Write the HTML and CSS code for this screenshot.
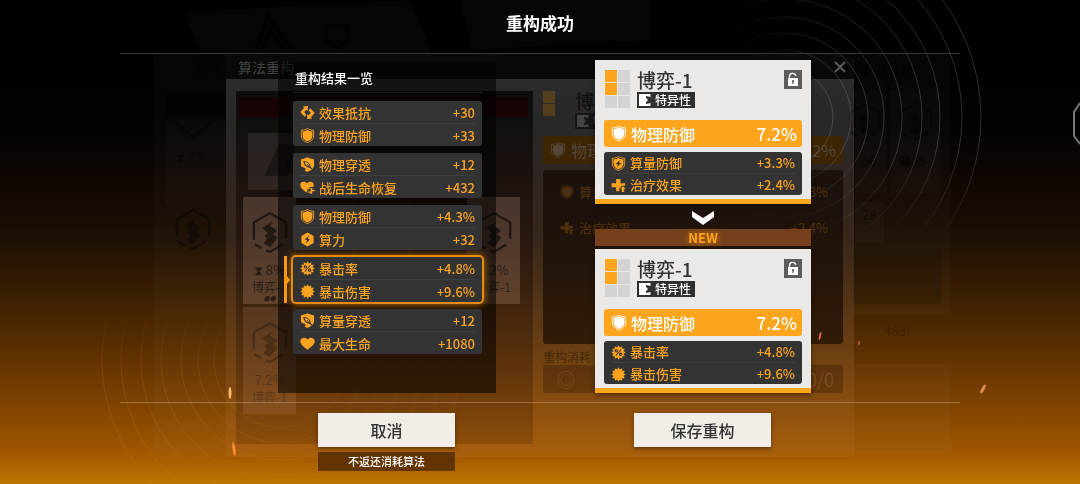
FILE: index.html
```html
<!DOCTYPE html>
<html lang="zh-CN">
<head>
    <meta charset="UTF-8">
    <meta name="viewport" content="width=device-width, initial-scale=1">
    <title>重构成功</title>
    <link rel="stylesheet" href="styles.css">
</head>
<body>
    <!-- icon set -->
    <svg class="icon-defs" aria-hidden="true">
        <symbol id="i-resist" viewBox="0 0 16 16">
            <path d="M8.5 1 3 1.6l1.3 1.7L.4 7.4l4.4 5 2-2-2.4-3L7 5l1.3 1.5zM7.5 15l5.5-.6-1.3-1.7 3.9-4.1-4.4-5-2 2 2.4 3L9 11l-1.3-1.5z"/>
        </symbol>
        <symbol id="i-shield" viewBox="0 0 16 16">
            <path d="M8 .6c2 1.2 4 1.700 6.600 1.800v6.100c0 3.500-3 5.800-6.600 7-3.600-1.200-6.600-3.500-6.600-7V2.400C4 2.300 6 1.800 8 .6z" fill="none" stroke="currentColor" stroke-width=".9"/>
            <path d="M8 2c1.600.9 3.200 1.300 5.300 1.400v5.100c0 2.800-2.400 4.600-5.300 5.700-2.900-1.100-5.300-2.900-5.300-5.700V3.400C4.800 3.300 6.400 2.900 8 2z"/>
        </symbol>
        <symbol id="i-pierce" viewBox="0 0 16 16">
            <path fill-rule="evenodd" d="M8 .3c2.200 1.300 4.400 1.900 7 2v6.300c0 3.700-3.200 6-7 7.200-1-.3-2-.7-2.800-1.200L6 12 1.600 10.500A6 6 0 0 1 1 8.600V2.300c2.600-.1 4.800-.7 7-2zM3.600 4.200c.1 3.500 2.200 6.600 7 7.400l1.900 1.600.7-.8-1.800-1.700C11.200 6.600 8 4.300 3.600 4.200zM5 5.400c3 .3 5 2 5.400 4.600L7.600 7.500l-.5.6 2.600 2.300C7 9.700 5.300 8 5 5.400z"/>
        </symbol>
        <symbol id="i-heart" viewBox="0 0 16 16">
            <path d="M8 14.600C4.500 11.800.3 9.200.3 5.600.3 1.700 5.600.4 8 3.700c2.400-3.300 7.700-2 7.700 1.900 0 3.600-4.200 6.200-7.700 9z"/>
        </symbol>
        <symbol id="i-regen" viewBox="0 0 16 16">
            <path d="M7.200 13.400C4 10.900.3 8.600.3 5.300.3 1.900 5 .7 7.300 3.600 9.600.7 14.600 1.700 14.600 5.300c0 .8-.2 1.500-.6 2.200h-3.800v2.300H7.800v3z"/>
            <path d="M11.200 8.500h1.800v2h2.700v1.600H13V15h-1.800v-1.300H8.800v-1.500h2.400z"/>
        </symbol>
        <symbol id="i-power" viewBox="0 0 16 16">
            <path fill-rule="evenodd" d="M8 .5l6.500 3.700v7.600L8 15.500l-6.500-3.700V4.200zM9.600 3.800 5.200 8l2.400.9-1.400 3.400 4.500-4.400-2.400-.8z"/>
        </symbol>
        <symbol id="i-burst" viewBox="0 0 16 16">
            <path d="M8 .2 9.450 2.600 11.900 1.250 11.960 4.040 14.750 4.100 13.400 6.550 15.800 8 13.400 9.450 14.750 11.900 11.960 11.960 11.900 14.750 9.450 13.400 8 15.800 6.550 13.400 4.100 14.750 4.040 11.960 1.250 11.900 2.600 9.450 .2 8 2.600 6.550 1.250 4.100 4.040 4.040 4.100 1.250 6.550 2.600z"/>
        </symbol>
        <symbol id="i-rate" viewBox="0 0 16 16">
            <use href="#i-burst"/>
            <g fill="none" stroke="#333" stroke-width="1.200"><path d="M10.800 4.800l-5.600 6.400"/><circle cx="5.700" cy="6.200" r="1.200"/><circle cx="10.300" cy="9.900" r="1.200"/></g>
        </symbol>
        <symbol id="i-calcdef" viewBox="0 0 16 16">
            <use href="#i-shield"/>
            <path fill="#333" d="M9.400 4.200 5.200 8.500l2.300.6-1 3 4.300-4.600-2.300-.5z"/>
        </symbol>
        <symbol id="i-heal" viewBox="0 0 16 16">
            <path d="M5.500 1h4.600v4.600h5v2.600h-4.300v2H9v3.800H5.500v-4.200H.6V5.600h4.900z"/>
            <path d="M12.800 8.800l2.800 2.700h-1.500V15h-2.600v-3.500H10z"/>
        </symbol>
        <symbol id="i-lock" viewBox="0 0 18 19">
            <path d="M5.500 7.800V6.500a3.200 3.200 0 0 1 6.300-.7" fill="none" stroke="currentColor" stroke-width="1.300"/>
            <path fill-rule="evenodd" d="M4 8h10v8H4zm5 2a1.200 1.200 0 0 0-.6 2.200V14h1.200v-1.800A1.200 1.200 0 0 0 9 10z"/>
        </symbol>
        <symbol id="i-trait" viewBox="0 0 12 12">
            <path d="M0 0h11.500v3L7 2v2l1.500 1v2L7 8v2l4.500-1v3H0z"/>
        </symbol>
        <symbol id="i-hex" viewBox="0 0 40 46">
            <path d="M3 30V12L20 2l17 10v17M33 35 20 43l-4-2M11 39l-7-4" fill="none" stroke="currentColor" stroke-width="2.500"/>
            <path d="M23 10 12 18l6 5-4 3 3 3-4 5 7 4 8-10-5-4 5-3-8-6z"/>
        </symbol>
    </svg>

    <!-- reconstruct window, dimmed under the result -->
    <div class="window" aria-hidden="true">
        <div class="window-head">
            <span>算法重构</span>
            <button class="window-close" tabindex="-1"><svg viewBox="0 0 12 12"><path d="M1 1l10 10M11 1 1 11"/></svg></button>
        </div>
        <div class="window-body">
            <div class="bag">
                <div class="bag-strip"></div>
                <div class="bag-preview"><svg viewBox="0 0 60 50"><path d="M4 38 18 8l14 4-6 26z"/><circle cx="34" cy="28" r="10"/></svg></div>
                <div class="bag-grid">
                    <div class="slot"><svg><use href="#i-hex"/></svg><b>⧗ 8%</b><span>博弈-1</span><i>●●</i></div>
                    <div class="slot dark"></div>
                    <div class="slot dark"></div>
                    <div class="slot dark"></div>
                    <div class="slot"><svg><use href="#i-hex"/></svg><b>7.2%</b><span>博弈-1</span></div>
                    <div class="slot low"><svg><use href="#i-hex"/></svg><b>7.2%</b><span>博弈-1</span></div>
                </div>
            </div>
            <div class="detail">
                <div class="detail-top">
                    <div class="cells"><i class="on"></i><i></i><i class="on"></i><i></i><i></i><i></i></div>
                    <div>
                        <div class="name">博弈-1</div>
                        <div class="trait"><svg><use href="#i-trait"/></svg>特异性</div>
                    </div>
                </div>
                <div class="detail-main"><svg><use href="#i-shield"/></svg><span>物理防御</span><b>7.2%</b></div>
                <div class="detail-sub">
                    <div><svg><use href="#i-calcdef"/></svg><span>算量防御</span><b>+3.3%</b></div>
                    <div><svg><use href="#i-heal"/></svg><span>治疗效果</span><b>+2.4%</b></div>
                </div>
                <div class="cost-label">重构消耗</div>
                <div class="cost"><span>◎</span><b>0/0</b></div>
            </div>
        </div>
    </div>

    <!-- rings, sparks and far scenery -->
    <svg class="scene" viewBox="0 0 1080 484" preserveAspectRatio="xMidYMid slice" aria-hidden="true">
        <defs>
            <linearGradient id="fade" x1="0" x2="1"><stop offset=".2" stop-color="#999" stop-opacity="0"/><stop offset="1" stop-color="#999" stop-opacity=".3"/></linearGradient>
            <linearGradient id="fade2" x1="1" x2="0"><stop offset=".2" stop-color="#d98a3c" stop-opacity=".08"/><stop offset="1" stop-color="#d98a3c" stop-opacity=".2"/></linearGradient>
            <linearGradient id="down" x2="0" y2="1"><stop offset="0" stop-color="#fff"/><stop offset=".6" stop-color="#fff"/><stop offset="1" stop-color="#000"/></linearGradient>
            <linearGradient id="up" x2="0" y2="1"><stop offset="0" stop-color="#000"/><stop offset=".5" stop-color="#fff"/></linearGradient>
            <mask id="m"><rect x="540" width="540" height="250" fill="url(#down)"/></mask>
            <mask id="m2"><rect y="300" width="540" height="184" fill="url(#up)"/></mask>
        </defs>
        <g fill="#fff" fill-opacity=".02">
            <path d="M184 12 410 0l22 53H200zM460 0h190v40l-178 10z"/>
            <path d="M153 54h73v403h-73zM853 54h98v260h-98zM853 364h98v90h-98z"/>
            <path d="M166 120h60v84h-60zM856 84h30v110h-30zM890 84h50v110h-50zM856 202h28v40h-28z"/>
        </g>
        <path d="M166 92h60v26h-60zM853 84h88v6h-88z" fill="#000" fill-opacity=".3"/>
        <path d="M853 250h88v54h-88z" fill="#000" fill-opacity=".12"/>
        <path d="M256 50l12-34 24 34M262 50l8-20 14 20M326 26h22v14l-11 8-11-8z" fill="none" stroke="#000" stroke-width="4" stroke-opacity=".5"/>
        <g class="far-text">
            <text x="195" y="72">区间</text><text x="176" y="162">⧗ 8%</text><text x="862" y="74">◧特异性</text>
            <text x="862" y="166">56</text><text x="898" y="166">●55</text><text x="862" y="220">28</text><text x="884" y="336" fill-opacity=".2">483/</text>
        </g>
        <g class="far-hex">
            <use href="#i-hex" x="174" y="208" width="38" height="44"/><use href="#i-hex" x="848" y="100" width="34" height="44"/><use href="#i-hex" x="898" y="100" width="36" height="44"/>
            <path d="M175 122l18 15 18-15" fill="none" stroke="#000" stroke-width="3"/>
        </g>
        <g mask="url(#m)" fill="none" stroke="url(#fade)">
            <circle cx="784" cy="117" r="49"/><circle cx="784" cy="117" r="67"/><circle cx="784" cy="117" r="84"/><circle cx="784" cy="117" r="100"/><circle cx="784" cy="117" r="118"/><circle cx="784" cy="117" r="138"/><circle cx="784" cy="117" r="156"/><circle cx="784" cy="117" r="178"/><circle cx="784" cy="117" r="197"/>
        </g>
        <g mask="url(#m2)" fill="none" stroke="url(#fade2)">
            <circle cx="281" cy="360" r="67"/><circle cx="281" cy="360" r="83"/><circle cx="281" cy="360" r="100"/><circle cx="281" cy="360" r="120"/><circle cx="281" cy="360" r="140"/><circle cx="281" cy="360" r="160"/><circle cx="281" cy="360" r="179"/>
        </g>
        <path d="M1080 103l-6 9v24l6 8" fill="none" stroke="#777" stroke-width="2"/>
        <g fill="#ffb765">
            <ellipse cx="230" cy="393" rx="1.500" ry="6"/>
            <ellipse cx="234" cy="449" rx="1.500" ry="7" fill="#ff8a35" transform="rotate(-8 234 449)"/>
            <ellipse cx="983" cy="389" rx="1.500" ry="5" fill="#e08a4a" transform="rotate(28 983 389)"/>
            <ellipse cx="820" cy="336" rx="1" ry="4" fill="#d9722e" transform="rotate(12 820 336)"/>
            <ellipse cx="859" cy="343" rx="1" ry="2" fill="#b8602a"/>
        </g>
    </svg>

    <main class="result">
        <h1 class="result-title">重构成功</h1>

        <div class="columns">
            <section class="history">
                <h2>重构结果一览</h2>
                <div class="options">
                    <button class="option">
                        <span class="stat"><svg><use href="#i-resist"/></svg>效果抵抗<b>+30</b></span>
                        <span class="stat"><svg><use href="#i-shield"/></svg>物理防御<b>+33</b></span>
                    </button>
                    <button class="option">
                        <span class="stat"><svg><use href="#i-pierce"/></svg>物理穿透<b>+12</b></span>
                        <span class="stat"><svg><use href="#i-regen"/></svg>战后生命恢复<b>+432</b></span>
                    </button>
                    <button class="option">
                        <span class="stat"><svg><use href="#i-shield"/></svg>物理防御<b>+4.3%</b></span>
                        <span class="stat"><svg><use href="#i-power"/></svg>算力<b>+32</b></span>
                    </button>
                    <button class="option selected" aria-pressed="true">
                        <span class="stat"><svg><use href="#i-rate"/></svg>暴击率<b>+4.8%</b></span>
                        <span class="stat"><svg><use href="#i-burst"/></svg>暴击伤害<b>+9.6%</b></span>
                    </button>
                    <button class="option">
                        <span class="stat"><svg><use href="#i-pierce"/></svg>算量穿透<b>+12</b></span>
                        <span class="stat"><svg><use href="#i-heart"/></svg>最大生命<b>+1080</b></span>
                    </button>
                </div>
            </section>

            <section class="compare">
                <article class="card">
                    <div class="card-top">
                        <div class="cells"><i class="on"></i><i></i><i class="on"></i><i></i><i></i><i></i></div>
                        <div class="card-info">
                            <h3 class="name">博弈-1</h3>
                            <div class="trait"><svg><use href="#i-trait"/></svg>特异性</div>
                        </div>
                        <button class="lock" aria-label="锁定"><svg><use href="#i-lock"/></svg></button>
                    </div>
                    <div class="main-stat"><svg><use href="#i-shield"/></svg>物理防御<b>7.2%</b></div>
                    <div class="sub-stats">
                        <div class="stat"><svg><use href="#i-calcdef"/></svg>算量防御<b>+3.3%</b></div>
                        <div class="stat"><svg><use href="#i-heal"/></svg>治疗效果<b>+2.4%</b></div>
                    </div>
                </article>

                <svg class="arrow" viewBox="0 0 22 14" aria-hidden="true"><path d="M0 0l11 7 11-7v6l-11 8L0 6z"/></svg>
                <div class="new-tag">NEW</div>

                <article class="card">
                    <div class="card-top">
                        <div class="cells"><i class="on"></i><i></i><i class="on"></i><i></i><i></i><i></i></div>
                        <div class="card-info">
                            <h3 class="name">博弈-1</h3>
                            <div class="trait"><svg><use href="#i-trait"/></svg>特异性</div>
                        </div>
                        <button class="lock" aria-label="锁定"><svg><use href="#i-lock"/></svg></button>
                    </div>
                    <div class="main-stat"><svg><use href="#i-shield"/></svg>物理防御<b>7.2%</b></div>
                    <div class="sub-stats">
                        <div class="stat"><svg><use href="#i-rate"/></svg>暴击率<b>+4.8%</b></div>
                        <div class="stat"><svg><use href="#i-burst"/></svg>暴击伤害<b>+9.6%</b></div>
                    </div>
                </article>
            </section>
        </div>

        <div class="actions">
            <div class="action">
                <button class="btn">取消</button>
                <p class="note">不返还消耗算法</p>
            </div>
            <div class="action">
                <button class="btn">保存重构</button>
            </div>
        </div>
    </main>
</body>
</html>
```

FILE: styles.css
```css
* {
    box-sizing: border-box;
}
body {
    margin: 0;
    min-height: 100vh;
    position: relative;
    overflow: hidden;
    font-family: "Noto Sans CJK SC", "Noto Sans", sans-serif;
    font-size: 13px;
    line-height: 20px;
    background: linear-gradient(#000 0%, #020101 25%, #0d0602 36%, #1e1003 50%, #3d2002 62%, #603200 74%, #804400 84%, #9f5600 93%, #b06600 97%, #bd7500 100%);
}
h1, h2, h3, p {
    margin: 0;
}
button {
    font: inherit;
    border: none;
    padding: 0;
    cursor: pointer;
}
svg {
    display: block;
    fill: currentColor;
    flex-shrink: 0;
}
b {
    font-weight: 400;
    margin-left: auto;
}
.icon-defs {
    position: absolute;
    width: 0;
    height: 0;
}

/* far scenery */
.scene {
    position: absolute;
    top: 0;
    left: 0;
    width: 100%;
    height: 100%;
}
.far-text {
    font-size: 13px;
    fill: #000;
    fill-opacity: 0.5;
}
.far-hex {
    color: #000;
    opacity: 0.35;
}

/* window under the result */
.window {
    position: absolute;
    top: 54px;
    left: calc(50% - 314px);
    width: 628px;
    height: 403px;
    display: flex;
    flex-direction: column;
}
.window-head {
    height: 25px;
    padding: 0 8px 0 12px;
    display: flex;
    align-items: center;
    justify-content: space-between;
    font-size: 14px;
    color: #424242;
    background: #090909;
}
.window-close {
    background: none;
}
.window-close svg {
    width: 12px;
    height: 12px;
    stroke: #5a5a5a;
    stroke-width: 2;
}
.window-body {
    flex: 1;
    display: flex;
    gap: 10px;
    padding: 12px 10px 13px;
    background: linear-gradient(rgba(255, 255, 255, 0.17), rgba(230, 200, 190, 0.13) 40%, rgba(210, 140, 100, 0.12));
}
.bag {
    width: 297px;
    padding: 6px 0 0 7px;
    background: linear-gradient(rgba(0, 0, 0, 0.7), rgba(20, 5, 0, 0.5) 35%, rgba(80, 35, 0, 0.25));
}
.bag-strip {
    height: 20px;
    margin: 0 5px 0 -4px;
    background: #170303;
}
.bag-preview {
    width: 82px;
    height: 57px;
    margin: 16px 0 7px 5px;
    background: rgba(255, 255, 255, 0.08);
    color: rgba(0, 0, 0, 0.35);
}
.bag-preview svg {
    width: 66px;
    height: 57px;
    margin-left: 12px;
}
.bag-grid {
    display: grid;
    grid-template-columns: repeat(5, 53px);
    gap: 3px;
}
.slot {
    height: 107px;
    padding-top: 14px;
    display: flex;
    flex-direction: column;
    align-items: center;
    font-size: 12px;
    line-height: 16px;
    color: rgba(0, 0, 0, 0.55);
    background: rgba(235, 190, 165, 0.2);
}
.slot.low {
    color: rgba(0, 0, 0, 0.25);
    background: rgba(235, 190, 165, 0.12);
}
.slot.dark {
    background: rgba(0, 0, 0, 0.15);
}
.slot svg {
    width: 38px;
    height: 44px;
    margin-bottom: 5px;
}
.slot b {
    margin: 0;
    font-size: 13px;
    line-height: 19px;
}
.slot i {
    font-size: 6px;
    line-height: 8px;
}
.detail {
    width: 300px;
}
.detail-top {
    display: flex;
    gap: 7px;
    height: 45px;
    opacity: 0.6;
}
.detail .cells {
    opacity: 0.5;
}
.detail .cells i {
    background: none;
}
.detail .cells i.on {
    background: #b87408;
}
.detail .name {
    color: #000;
}
.detail .trait {
    color: #555;
    background: #080808;
}
.detail-main {
    height: 28px;
    padding: 0 7px;
    display: flex;
    align-items: center;
    gap: 5px;
    font-size: 16px;
    color: #54473a;
    background: #3d2403;
    border-radius: 3px;
}
.detail-main svg {
    width: 16px;
    height: 16px;
}
.detail-sub {
    height: 174px;
    margin: 6px 0 3px;
    padding: 4px 15px 0 17px;
    background: rgba(15, 5, 0, 0.6);
    border-radius: 3px;
    color: #50300a;
}
.detail-sub div {
    height: 36px;
    display: flex;
    align-items: center;
    gap: 5px;
}
.detail-sub svg {
    width: 14px;
    height: 14px;
}
.cost-label {
    height: 18px;
    font-size: 12px;
    color: rgba(0, 0, 0, 0.4);
}
.cost {
    height: 28px;
    padding: 0 9px 0 14px;
    display: flex;
    align-items: center;
    font-size: 18px;
    color: rgba(160, 110, 70, 0.4);
    background: rgba(40, 15, 0, 0.3);
    border-radius: 3px;
}

/* result */
.result {
    position: relative;
    width: calc(100% - 240px);
    margin: 0 auto;
}
.result-title {
    height: 54px;
    padding-top: 13px;
    text-align: center;
    font-size: 17px;
    font-weight: 700;
    color: #fff;
    border-bottom: 1px solid #383838;
}
.columns {
    display: flex;
    justify-content: center;
    gap: 99px;
    padding: 6px 0 9px 9px;
}
.history {
    width: 218px;
    margin-top: 2px;
    padding: 6px 14px 39px 15px;
    background: rgba(0, 0, 0, 0.55);
}
.history h2 {
    height: 25px;
    margin-bottom: 8px;
    padding-left: 2px;
    font-size: 13px;
    font-weight: 500;
    color: #fff;
    border-bottom: 1px solid #1c1c1c;
}
.options {
    display: flex;
    flex-direction: column;
    gap: 7px;
}
.option {
    position: relative;
    display: block;
    width: 100%;
    height: 45px;
    color: #fca320;
    background: #333;
    border-radius: 3px;
    text-align: left;
}
.option.selected {
    box-shadow: 0 0 0 1px #e88a0c, 0 0 0 2px #e88a0c, 0 0 7px 2px #c87408;
}
/* marker at the left of the chosen row */
.option.selected::before {
    content: "";
    position: absolute;
    left: -9px;
    top: -1px;
    width: 3px;
    height: 47px;
    background: #f8990f;
}
.option.selected::after {
    content: "";
    position: absolute;
    left: -6px;
    top: 19px;
    border: 4px solid transparent;
    border-left: 3px solid #f8990f;
    border-right: none;
}
.stat {
    display: flex;
    align-items: center;
    gap: 4px;
    height: 22px;
    margin: 0 7px;
    padding-top: 1px;
    font-weight: 500;
}
.stat b {
    font-weight: 500;
}
.stat + .stat {
    height: 23px;
    border-top: 1px solid #3f3f3f;
}
.stat svg {
    width: 15px;
    height: 15px;
}
.compare {
    width: 216px;
    display: flex;
    flex-direction: column;
    align-items: center;
}
.card {
    width: 100%;
    height: 144px;
    padding: 10px 9px 0;
    background: #ebe9e8;
    border-bottom: 5px solid #fda51c;
    box-shadow: 0 2px 5px rgba(0, 0, 0, 0.4);
}
.card-top {
    display: flex;
    align-items: flex-start;
    height: 50px;
    padding-left: 1px;
}
.cells {
    display: grid;
    grid-template-columns: 12px 12px;
    grid-auto-rows: 12px;
    gap: 1px;
}
.cells i {
    background: #d5d4d4;
}
.cells i.on {
    background: #fda51c;
}
.card-info {
    margin-left: 7px;
}
.name {
    height: 22px;
    font-size: 19px;
    font-weight: 500;
    color: #333;
}
.trait {
    display: flex;
    align-items: center;
    gap: 4px;
    height: 16px;
    padding: 0 4px 0 2px;
    font-size: 12px;
    line-height: 16px;
    font-weight: 500;
    color: #fff;
    background: #303030;
}
.trait svg {
    width: 12px;
    height: 12px;
}
.lock {
    margin-left: auto;
    color: #fff;
    background: #5c5c5c;
}
.lock svg {
    width: 18px;
    height: 19px;
}
.main-stat {
    display: flex;
    align-items: center;
    gap: 4px;
    height: 27px;
    margin-bottom: 5px;
    padding: 0 5px 0 7px;
    font-size: 16px;
    font-weight: 500;
    color: #fff;
    background: #fda51c;
    border-radius: 3px;
}
.main-stat b {
    font-size: 17px;
    font-weight: 500;
}
.main-stat svg {
    width: 16px;
    height: 17px;
}
.sub-stats {
    height: 43px;
    color: #fca320;
    background: #333;
    border-radius: 3px;
}
.sub-stats .stat {
    height: 21px;
}
.sub-stats .stat + .stat {
    height: 22px;
}
.arrow {
    width: 22px;
    height: 14px;
    margin: 7px 0 4px;
    color: #fff;
}
.new-tag {
    width: 100%;
    height: 17px;
    margin-bottom: 3px;
    text-align: center;
    font-weight: 700;
    line-height: 17px;
    color: #fca320;
    text-shadow: 0 0 6px #e08000;
    background: #75401a;
}
.actions {
    display: flex;
    justify-content: center;
    gap: 99px;
    padding: 10px 0 12px 9px;
    border-top: 1px solid rgba(255, 220, 180, 0.3);
}
.action {
    width: 217px;
    display: flex;
    flex-direction: column;
    align-items: center;
}
.btn {
    width: 137px;
    height: 34px;
    font-size: 16px;
    font-weight: 500;
    color: #333;
    background: #f3ede7;
    box-shadow: 0 2px 4px rgba(0, 0, 0, 0.4);
}
.note {
    width: 137px;
    height: 19px;
    margin-top: 5px;
    text-align: center;
    font-size: 11px;
    font-weight: 500;
    line-height: 19px;
    color: #fff;
    background: rgba(50, 22, 0, 0.6);
}
```
